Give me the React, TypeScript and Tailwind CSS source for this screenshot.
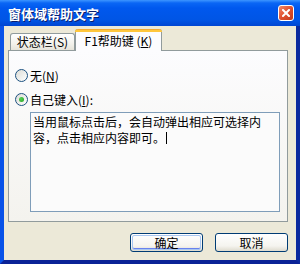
export default function App() {
  return (
    <div className="w-[300px] h-[264px] flex flex-col overflow-hidden bg-[#0A2A9E] font-['Noto_Sans_CJK_SC','Noto_Sans',sans-serif] text-[12px] text-black">
      {/* Title bar */}
      <div className="h-[26px] shrink-0 flex items-center justify-between pl-[8px] pr-[6px] bg-[linear-gradient(to_bottom,#3d95ff_0px,#0a66f5_3px,#0058ee_8px,#0055e5_20px,#0046d2_26px)]">
        <span className="text-white font-bold text-[13px] leading-none tracking-[0px] [text-shadow:1px_1px_0_#0a1e6e]">窗体域帮助文字</span>
        <div className="w-[16px] h-[16px] rounded-[3px] border border-white bg-[linear-gradient(135deg,#f08a6a,#e0502f_50%,#c23a1a)] flex items-center justify-center">
          <svg width="8" height="8" viewBox="0 0 8 8">
            <path d="M1 1 L7 7 M7 1 L1 7" stroke="white" strokeWidth="2" strokeLinecap="square" />
          </svg>
        </div>
      </div>
      {/* Body */}
      <div className="flex-1 flex flex-col bg-[#ECE9D8] border-l-[4px] border-l-[#0852E8] border-r-[4px] border-r-[#0A2A9E] border-b-[4px] border-b-[#0A2296] pl-[4px]">
        {/* Tabs */}
        <div className="flex items-end h-[22px] pl-[2px] mt-[2px]">
          <div className="w-[65px] h-[17px] border border-b-0 border-[#919B9C] rounded-t-[3px] bg-[linear-gradient(to_bottom,#ffffff,#f3f2ec_60%,#e6e4da)] flex items-center justify-center leading-none">
            状态栏(S)
          </div>
          <div className="relative z-10 -mb-[1px] w-[87px] h-[22px] border border-b-0 border-[#919B9C] border-t-0 rounded-t-[3px] bg-[#FCFCFE] flex flex-col">
            <div className="h-[3px] rounded-t-[3px] bg-[linear-gradient(to_bottom,#e68b2c,#ffc73c_33%,#ffc73c)] -mx-[1px]" />
            <div className="flex-1 flex items-center justify-center leading-none pb-[1px]">
              F1帮助键 (<u>K</u>)
            </div>
          </div>
        </div>
        {/* Panel */}
        <div className="w-[280px] h-[172px] border border-[#919B9C] bg-[linear-gradient(to_bottom,#fcfcfe,#f4f3ee)] flex flex-col pt-[18px] pl-[6px]">
          <div className="flex items-center h-[13px]">
            <span className="w-[13px] h-[13px] rounded-full border border-[#1C5180] bg-[linear-gradient(135deg,#dcdcd6,#ffffff)]" />
            <span className="ml-[2px] leading-none">无(<u>N</u>)</span>
          </div>
          <div className="flex items-center h-[13px] mt-[11px]">
            <span className="w-[13px] h-[13px] rounded-full border border-[#1C5180] bg-[linear-gradient(135deg,#dcdcd6,#ffffff)] flex items-center justify-center">
              <span className="w-[5px] h-[5px] rounded-full bg-[radial-gradient(circle_at_35%_35%,#55d055,#21a121)]" />
            </span>
            <span className="ml-[2px] leading-none">自己键入(<u>I</u>):</span>
          </div>
          <div className="ml-[15px] mt-[6px] w-[250px] h-[100px] border border-[#7F9DB9] bg-[#FBFBFB] pl-[2px] pt-[1px] leading-[16px] text-[12px]">
            <div>当用鼠标点击后，会自动弹出相应可选择内</div>
            <div className="flex items-center">
              <span>容，点击相应内容即可。</span>
              <span className="ml-[1px] w-[1px] h-[12px] bg-black" />
            </div>
          </div>
        </div>
        {/* Buttons */}
        <div className="w-[280px] flex justify-end gap-[12px] mt-[11px]">
          <div className="w-[73px] h-[19px] rounded-[3px] border border-[#003C74] bg-[linear-gradient(to_bottom,#ffffff,#f5f4ef_70%,#dedbce)] p-[1px]">
            <div className="w-full h-full rounded-[2px] border border-[#a8c6f0] shadow-[inset_0_-1px_0_#6982ee] flex items-center justify-center leading-none">
              确定
            </div>
          </div>
          <div className="w-[73px] h-[19px] rounded-[3px] border border-[#003C74] bg-[linear-gradient(to_bottom,#ffffff,#f5f4ef_70%,#dedbce)] flex items-center justify-center leading-none">
            取消
          </div>
        </div>
      </div>
    </div>
  );
}
